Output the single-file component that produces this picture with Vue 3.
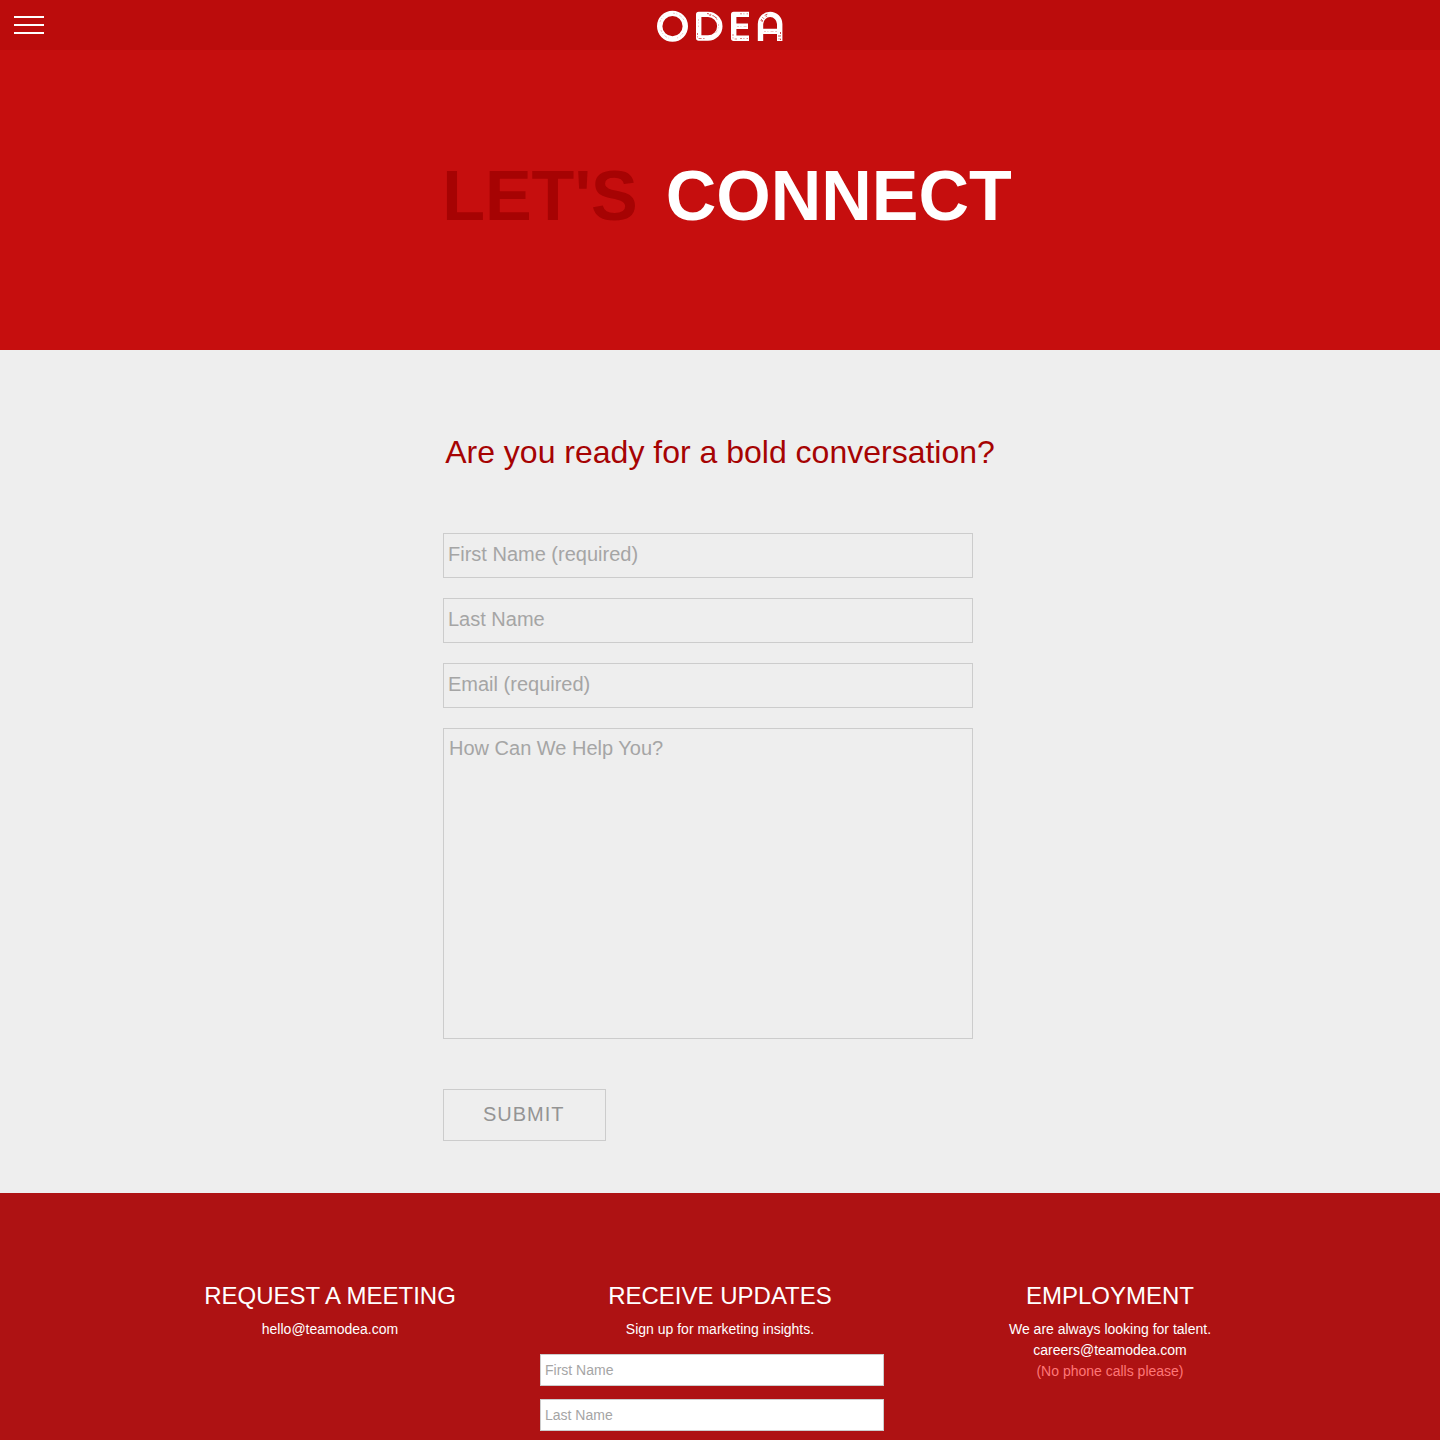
<script setup>
import { reactive } from 'vue'

const contact = reactive({ first: '', last: '', email: '', message: '' })
const updates = reactive({ first: '', last: '' })
</script>

<template>
  <div class="page">
    <header class="topbar">
      <button class="menu" type="button" aria-label="Menu">
        <span></span><span></span><span></span>
      </button>
      <a class="logo" href="#" aria-label="Odea">
        <svg width="126" height="32" viewBox="0 0 126 32" fill="none">
          <g stroke="#fff" stroke-width="5.4">
            <circle cx="15.5" cy="16.2" r="12.8" />
            <path d="M41.7 4.4H51a11.8 11.8 0 0 1 0 23.6H41.7z" stroke-linejoin="round" />
            <path d="M92 4.4H76.7V28.3H92M76.7 16.3H91" stroke-linejoin="round" />
            <path d="M103.5 31V14a9.6 9.6 0 0 1 19.2 0V31M103.5 21.4H122.7" />
          </g>
          <g stroke="#c4201f" stroke-width="0.8" stroke-dasharray="2 1.4 1 2.2 3 1.6">
            <path d="M16 3.2a12.8 12.8 0 0 1 11 7.2M4 20a12.8 12.8 0 0 0 8 8.2M3 12a13 13 0 0 1 4-6M26 23a13 13 0 0 1-6 5" opacity="0.35" />
            <path d="M50 3.6a12 12 0 0 1 10 6M52 5a12 12 0 0 1 8 3.5" />
            <path d="M40.5 23v5.5h7" opacity="0.8" />
            <path d="M41.5 9v8M61.5 14a12 12 0 0 1-4 10M80 16.5h10M107 21.5h13" opacity="0.35" />
            <path d="M83 3.8h8M76 24v5h4M83 28.5h8" opacity="0.7" />
            <path d="M104 11a9.6 9.6 0 0 1 7-7M105 12a9 9 0 0 1 5-6M123.500 22v8M122 25v5" />
          </g>
        </svg>
      </a>
    </header>

    <section class="hero">
      <h1><span class="dim">LET'S</span> <span>CONNECT</span></h1>
    </section>

    <main class="contact">
      <div class="contact-inner">
        <h2>Are you ready for a bold conversation?</h2>
        <form @submit.prevent>
          <input v-model="contact.first" type="text" placeholder="First Name (required)" aria-label="First Name (required)" />
          <input v-model="contact.last" type="text" placeholder="Last Name" aria-label="Last Name" />
          <input v-model="contact.email" type="email" placeholder="Email (required)" aria-label="Email (required)" />
          <textarea v-model="contact.message" placeholder="How Can We Help You?" aria-label="How Can We Help You?"></textarea>
          <button class="submit" type="submit">SUBMIT</button>
        </form>
      </div>
    </main>

    <footer class="footer">
      <div class="columns">
        <section>
          <h3>REQUEST A MEETING</h3>
          <p><a href="mailto:hello@teamodea.com">hello@teamodea.com</a></p>
        </section>
        <section>
          <h3>RECEIVE UPDATES</h3>
          <p>Sign up for marketing insights.</p>
          <form class="signup" @submit.prevent>
            <input v-model="updates.first" type="text" placeholder="First Name" aria-label="First Name" />
            <input v-model="updates.last" type="text" placeholder="Last Name" aria-label="Last Name" />
          </form>
        </section>
        <section>
          <h3>EMPLOYMENT</h3>
          <p>We are always looking for talent.</p>
          <p><a href="mailto:careers@teamodea.com">careers@teamodea.com</a></p>
          <p class="note">(No phone calls please)</p>
        </section>
      </div>
    </footer>
  </div>
</template>

<style>
body {
  margin: 0;
  background: #ae1213;
}
</style>

<style scoped>
.page,
.page * {
  box-sizing: border-box;
}

.page {
  font-family: "Liberation Sans", Arial, sans-serif;
  color: #fff;
}

h1,
h2,
h3,
p {
  margin: 0;
}

a {
  color: inherit;
  text-decoration: none;
}

input,
textarea,
button {
  font-family: inherit;
  border-radius: 0;
  outline: none;
}

.topbar {
  display: grid;
  grid-template-columns: 1fr auto 1fr;
  align-items: center;
  height: 50px;
  padding: 0 14px;
  background: #bb0c0c;
}

.menu {
  display: flex;
  flex-direction: column;
  gap: 6px;
  width: 30px;
  padding: 0;
  border: 0;
  background: none;
  cursor: pointer;
}

.menu span {
  height: 2px;
  background: #fff;
}

.logo {
  display: flex;
  padding-top: 2px;
}

.hero {
  display: flex;
  align-items: center;
  justify-content: center;
  height: 300px;
  padding: 0 0 8px 14px;
  background: #c60e0e;
}

.hero h1 {
  display: flex;
  gap: 28px;
  font-size: 70px;
  line-height: 80px;
}

.dim {
  color: #a60303;
}

.contact {
  padding: 80px 20px 52px;
  background: #eee;
}

.contact-inner {
  max-width: 554px;
  margin: 0 auto;
}

.contact h2 {
  margin-bottom: 59px;
  color: #a60303;
  font-size: 32px;
  font-weight: 400;
  line-height: 44px;
  text-align: center;
}

.contact form {
  display: flex;
  flex-direction: column;
  align-items: flex-start;
  gap: 20px;
  padding-right: 24px;
}

.contact input,
.contact textarea {
  width: 100%;
  border: 1px solid #ccc;
  background: transparent;
  color: #666;
  font-size: 20px;
}

.contact input {
  height: 45px;
  padding: 0 4px 2px;
}

.contact textarea {
  display: block;
  height: 311px;
  padding: 7px 5px;
  line-height: 24px;
  resize: none;
}

.page ::placeholder {
  color: #a5a5a5;
  opacity: 1;
}

.submit {
  height: 52px;
  margin-top: 30px;
  padding: 0 40px 2px 39px;
  border: 1px solid #ccc;
  background: transparent;
  color: #949494;
  font-size: 20px;
  letter-spacing: 1px;
  cursor: pointer;
}

.footer {
  padding: 86px 0 9px;
  background: #ae1213;
}

.columns {
  display: grid;
  grid-template-columns: repeat(3, 1fr);
  max-width: 1170px;
  margin: 0 auto;
  text-align: center;
}

.columns section {
  padding: 0 15px;
}

.columns h3 {
  margin-bottom: 6px;
  font-size: 24px;
  font-weight: 400;
  line-height: 34px;
}

.columns p {
  font-size: 14px;
  line-height: 21px;
}

.columns .note {
  color: #f77;
}

.signup {
  display: flex;
  flex-direction: column;
  gap: 13px;
  padding: 14px 16px 0 0;
}

.signup input {
  height: 32px;
  padding: 0 4px;
  border: 1px solid #ccc;
  background: #fff;
  color: #666;
  font-size: 14px;
}
</style>
